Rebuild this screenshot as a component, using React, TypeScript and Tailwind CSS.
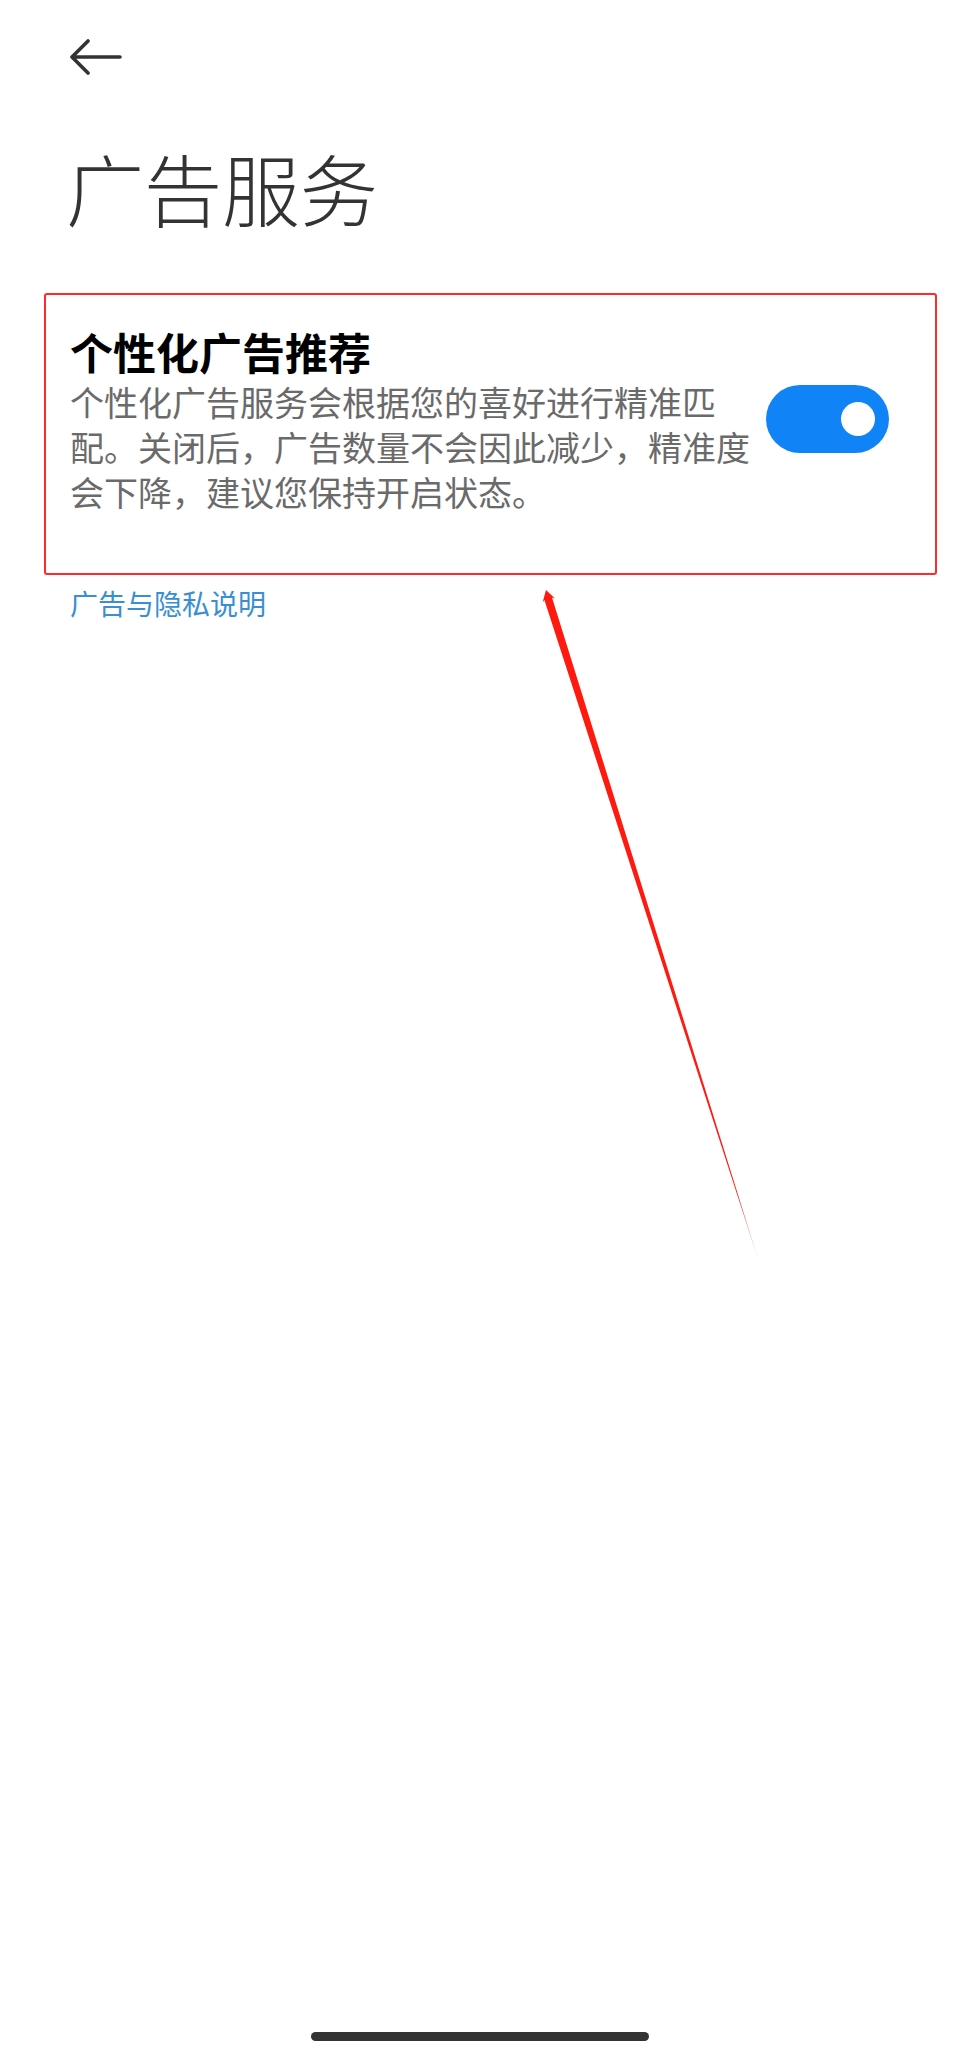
import { FC, useState } from "react"

const cjk = { fontFamily: '"Noto Sans CJK SC", "Noto Sans", sans-serif' }

const BackArrow: FC = () => (
  <svg width="56" height="40" viewBox="0 0 56 40" fill="none">
    <path
      d="M52 18H4M20 2L4 18l16 16"
      stroke="#333333"
      strokeWidth="3.6"
      strokeLinecap="round"
      strokeLinejoin="round"
    />
  </svg>
)

const Toggle: FC<{ on: boolean; onChange: () => void }> = ({ on, onChange }) => (
  <button
    type="button"
    onClick={onChange}
    className={
      on
        ? "flex h-[68px] w-[123px] shrink-0 items-center justify-end rounded-full bg-[#1083f6] pr-[14px]"
        : "flex h-[68px] w-[123px] shrink-0 items-center justify-start rounded-full bg-[#d6d6d6] pl-[14px]"
    }
  >
    <span className="h-[34px] w-[34px] rounded-full bg-white" />
  </button>
)

// red annotation arrow, drawn over the page
const Annotation: FC = () => (
  <svg
    className="pointer-events-none absolute left-0 top-0"
    width="960"
    height="2055"
    viewBox="0 0 960 2055"
  >
    <defs>
      <linearGradient id="fade" gradientUnits="userSpaceOnUse" x1="547" y1="591" x2="758" y2="1260">
        <stop offset="0" stopColor="#ff1a10" />
        <stop offset="0.9" stopColor="#ff1a10" />
        <stop offset="1" stopColor="#ff1a10" stopOpacity="0.25" />
      </linearGradient>
    </defs>
    <polygon
      points="546,590 555,598.5 552,597.6 759,1262 544.4,600 542.6,602.4"
      fill="url(#fade)"
    />
  </svg>
)

const App: FC = () => {
  const [on, setOn] = useState(true)

  return (
    <div className="relative flex min-h-[2055px] w-[960px] flex-col bg-white" style={cjk}>
      {/* top bar */}
      <div className="pl-[68px] pt-[39px]">
        <BackArrow />
      </div>

      {/* title */}
      <h1 className="mt-[63px] pl-[66px] text-[78px] font-light leading-[90px] text-[#333333]">
        广告服务
      </h1>

      {/* personalised ads row */}
      <div className="ml-[44px] mr-[23px] mt-[61px] flex items-center gap-[6px] rounded-[3px] border-2 border-[#ff2b2b] pb-[59px] pl-[24px] pr-[46px] pt-[28px]">
        <div className="flex-1">
          <div className="text-[43px] font-bold leading-[56px] text-black">个性化广告推荐</div>
          <p className="text-[34px] leading-[45px] text-[#6a6a6a]">
            个性化广告服务会根据您的喜好进行精准匹配。关闭后，广告数量不会因此减少，精准度会下降，建议您保持开启状态。
          </p>
        </div>
        <Toggle on={on} onChange={() => setOn(!on)} />
      </div>

      <a className="mt-[10px] pl-[70px] text-[28px] leading-[36px] text-[#3a8ed3]">广告与隐私说明</a>

      {/* gesture bar */}
      <div className="mt-auto flex justify-center pb-[14px]">
        <div className="h-[9px] w-[338px] rounded-full bg-[#333333]" />
      </div>

      <Annotation />
    </div>
  )
}

export default App
